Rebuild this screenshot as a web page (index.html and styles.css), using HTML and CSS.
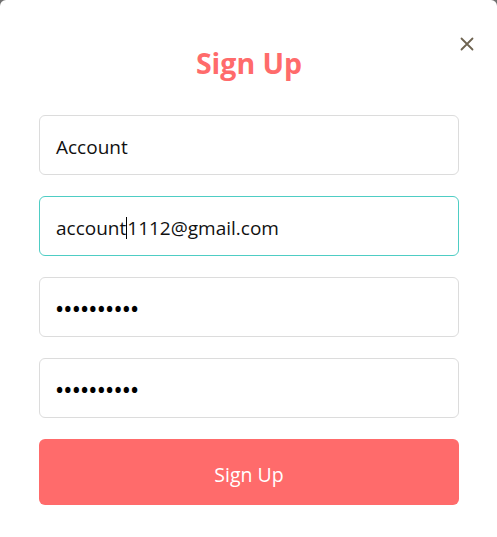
FILE: index.html
```html
<!DOCTYPE html>
<html>
<head>
<meta charset="utf-8">
<link rel="stylesheet" href="styles.css">
</head>
<body>
<div class="modal">
  <button class="close" aria-label="Close">
    <svg width="14" height="14" viewBox="0 0 14 14"><path d="M1.5 1.5 L12.5 12.5 M12.5 1.5 L1.5 12.5" stroke="#6e6350" stroke-width="1.8" stroke-linecap="round"/></svg>
  </button>
  <h2 class="title">Sign Up</h2>
  <form class="form">
    <div class="field">Account</div>
    <div class="field focused">account<span class="caret"></span>1112@gmail.com</div>
    <div class="field dots">••••••••••</div>
    <div class="field dots">••••••••••</div>
    <div class="submit">Sign Up</div>
  </form>
</div>
</body>
</html>
```
FILE: styles.css
```css
html, body {
  margin: 0;
  padding: 0;
  background: #707070;
  height: 100%;
  overflow: hidden;
}
body {
  font-family: "Open Sans", "Noto Sans", sans-serif;
}
.modal {
  position: relative;
  background: #fff;
  border-radius: 6px 6px 0 0;
  height: 100%;
  padding: 38px 38px 0 39px;
  box-sizing: border-box;
}
.close {
  position: absolute;
  top: 37px;
  right: 23px;
  background: none;
  border: 0;
  padding: 0;
  width: 14px;
  height: 14px;
  display: flex;
}
.title {
  margin: 0;
  text-align: center;
  color: #ff6b6b;
  font-size: 28.5px;
  font-weight: 700;
  line-height: 50px;
  height: 50px;
}
.form {
  margin-top: 27px;
  display: flex;
  flex-direction: column;
  gap: 21px;
}
.field {
  height: 60px;
  box-sizing: border-box;
  border: 1px solid #dcdcdc;
  border-radius: 6px;
  padding: 3px 16px 0;
  display: flex;
  align-items: center;
  font-size: 19px;
  color: #111;
}
.field.focused {
  border-color: #4ecdc4;
}
.caret {
  display: inline-block;
  width: 1px;
  height: 22px;
  background: #000;
}
.dots {
  font-size: 19px;
  font-weight: 700;
  letter-spacing: 1.2px;
  color: #000;
}
.submit {
  height: 66px;
  border-radius: 6px;
  background: #ff6b6b;
  color: #fff;
  font-size: 19.5px;
  padding-top: 4px;
  box-sizing: border-box;
  display: flex;
  align-items: center;
  justify-content: center;
}
```
